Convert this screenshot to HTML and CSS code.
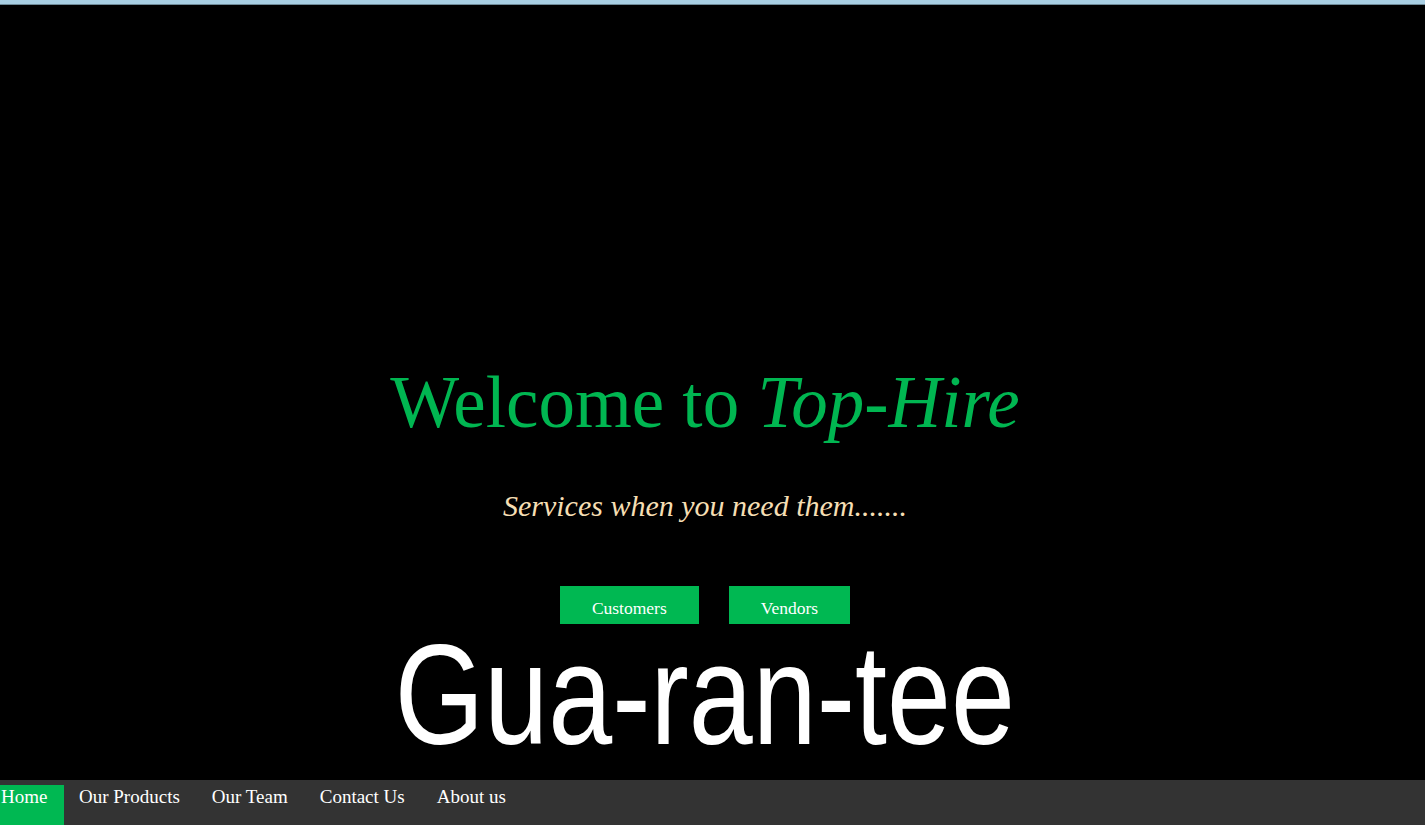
FILE: index.html
```html
<!DOCTYPE html>
<html lang="en">
<head>
<meta charset="utf-8">
<title>Top-Hire</title>
<link rel="stylesheet" href="styles.css">
</head>
<body>
<div class="chrome"></div>
<main class="hero">
  <h1 class="title">Welcome to <em>Top-Hire</em></h1>
  <p class="tagline">Services when you need them.......</p>
  <div class="actions">
    <a class="btn" href="#">Customers</a>
    <a class="btn" href="#">Vendors</a>
  </div>
  <div class="guarantee">Gua-ran-tee</div>
</main>
<nav class="nav">
  <a class="nav-link active" href="#">Home</a>
  <a class="nav-link" href="#">Our Products</a>
  <a class="nav-link" href="#">Our Team</a>
  <a class="nav-link" href="#">Contact Us</a>
  <a class="nav-link" href="#">About us</a>
</nav>
</body>
</html>
```
FILE: styles.css
```css
html, body {
  margin: 0;
  padding: 0;
  background: #000;
  overflow: hidden;
}
body {
  font-family: "Liberation Serif", serif;
  height: 825px;
}
.chrome {
  height: 4px;
  background: #a9cfe3;
  border-bottom: 1px solid #6f8b99;
}
.hero {
  height: 775px;
  display: flex;
  flex-direction: column;
  align-items: center;
  padding: 361px 15px 0 0;
  box-sizing: border-box;
}
.title {
  margin: 0;
  font-size: 73px;
  line-height: 73px;
  font-weight: normal;
  color: #00b651;
}
.title em {
  font-style: italic;
}
.tagline {
  margin: 52px 0 0;
  font-size: 30px;
  line-height: 29px;
  font-style: italic;
  color: #f5deb3;
}
.actions {
  margin-top: 66px;
  display: flex;
  gap: 30px;
}
.btn {
  display: flex;
  align-items: center;
  justify-content: center;
  height: 38px;
  padding: 6px 32px 0;
  box-sizing: border-box;
  background: #00b852;
  color: #fff;
  font-size: 17.5px;
  text-decoration: none;
}
.guarantee {
  font-family: "Liberation Sans", Arial, sans-serif;
  font-size: 142px;
  line-height: 142px;
  color: #fff;
  transform: scaleX(0.81);
}
.nav {
  height: 45px;
  background: #333;
  display: flex;
  align-items: flex-end;
}
.nav-link {
  height: 40px;
  padding: 2px 16px 0;
  box-sizing: border-box;
  color: #fff;
  font-size: 19px;
  text-decoration: none;
  line-height: 20px;
}
.nav-link.active {
  background: #00b852;
  width: 64px;
  padding-left: 1px;
  margin-right: -1px;
}
```
